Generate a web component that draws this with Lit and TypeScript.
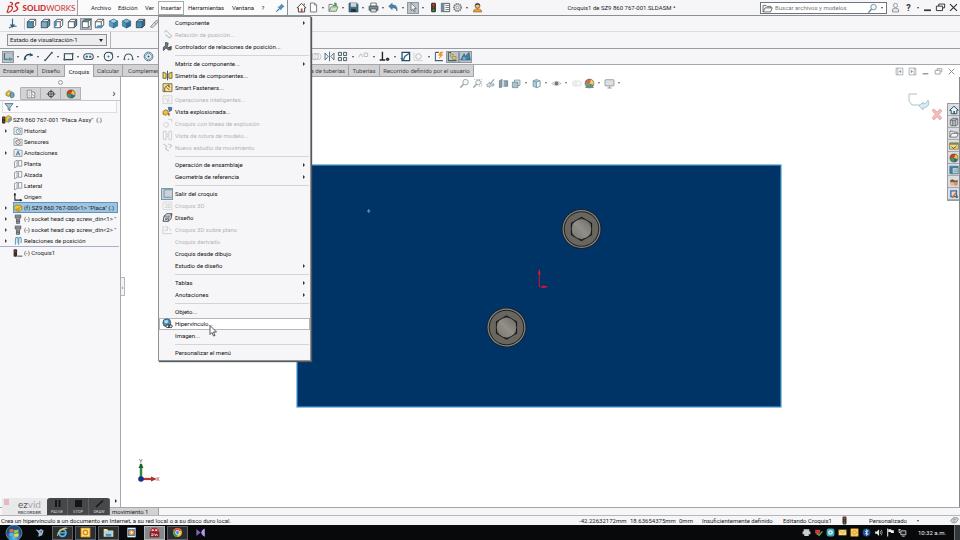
import { LitElement, html, css, svg, nothing } from "lit";
import { customElement } from "lit/decorators.js";
import { classMap } from "lit/directives/class-map.js";

const B = "#2f6f8f";
const K = "#3c4248";

const cube = (front: any, top: any, side: any) => svg`
  <path d="M2 5.500 6 2h8v8.500L10.500 14H2z" fill="#fff" stroke=${K} stroke-width="1"/>
  <path d="M2 5.500 6 2h8l-3.500 3.500z" fill=${top} stroke=${K} stroke-width=".9"/>
  <path d="M10.500 5.500 14 2v8.500L10.500 14z" fill=${side} stroke=${K} stroke-width=".9"/>
  <path d="M2 5.500h8.500V14H2z" fill=${front} stroke=${K} stroke-width=".9"/>`;

const iso = (a: string, b: string, c: string) => svg`
  <path d="M8 1.500 14 4.500v7L8 14.500 2 11.500v-7z" fill=${a} stroke="#1f5a78"/>
  <path d="M2 4.500 8 7.500v7L2 11.500z" fill=${b}/><path d="M8 7.500 14 4.500v7L8 14.500z" fill=${c}/>
  <path d="M2 4.500 8 7.500l6-3M8 7.500v7" fill="none" stroke="#1f5a78" stroke-width=".8"/>`;

const folder = (inner: any) => svg`
  <path d="M1.500 3.500V13.500H14.500V3.500H8L7 2H2.500z" fill="#e9edf0" stroke="#6b7880"/>${inner}`;

const ball = svg`<circle cx="8" cy="8" r="6.500" fill="#3f9a46"/>
  <path d="M8 8 1.500 8A6.500 6.500 0 0 1 10.500 2z" fill="#d33a2c"/>
  <path d="M8 8 10.500 2A6.500 6.500 0 0 1 14 10.500z" fill="#f1c232"/>
  <path d="M8 8 14 10.500A6.500 6.500 0 0 1 8 14.500z" fill="#2d62b4"/>
  <circle cx="8" cy="8" r="6.500" fill="none" stroke="#444" stroke-width=".8"/>`;

const part = svg`<path d="M1.500 7 5 3l3 1.500L10 3l4 2.500V10l-5 4-3-1.500V10L3.500 11 1.500 9.500z" fill="#f0c433" stroke="#8a6a10" stroke-width=".9"/>
  <path d="M6 10 9 8.500 14 5.500M9 8.500V14" fill="none" stroke="#8a6a10" stroke-width=".7"/>`;

const screw = svg`<path d="M3.500 1.500h9V6L10.500 8v7h-5V8L3.500 6z" fill="#989fa3" stroke="#3c4248"/>
  <path d="M3.500 5h9M5.500 9.500h5M5.500 12h5" stroke="#3c4248" stroke-width=".9"/>`;

const plane = svg`<path d="M2.500 4 6.500 2v10L2.500 14zM9 2.500H14V11.500H9z" fill="#fff" stroke="#5a6870"/>
  <path d="M6.500 12H9M6.500 2.500H9" stroke="#5a6870" stroke-width=".8" stroke-dasharray="1 1"/>`;

const ICONS: Record<string, any> = {
  home: svg`<path d="M8 2 1.500 8.500H3.500V14.500H12.500V8.500H14.500z" fill="#fff" stroke=${K} stroke-width="1.400"/><path d="M7 9.500h2.500v5H7z" fill="#b8442e"/><path d="M11 2h2v3l-2-1.800z" fill="#b8442e"/>`,
  page: svg`<path d="M3.500 1.500H9.500L12.500 4.500V14.500H3.500z" fill="#fff" stroke="#5d6468" stroke-width="1.200"/><path d="M9.500 1.500V4.500H12.500" fill="none" stroke="#5d6468"/>`,
  open: svg`<path d="M1.500 13.500V3.500H6L7 5H12V7" fill="#fff" stroke="#5a6a50" stroke-width="1.200"/><path d="M1.500 13.500 4.500 7H14.500L12 13.500z" fill="#cfe0c4" stroke="#5a6a50"/><path d="M8 6 12 2M12 2H9M12 2V5" stroke="#3f9a46" stroke-width="1.500" fill="none"/>`,
  save: svg`<path d="M1.500 1.500H12.500L14.500 3.500V14.500H1.500z" fill="#41728c" stroke="#2c4450"/><path d="M4 1.500H12V7H4z" fill="#c9d6dc"/><path d="M4.500 10H11.500V14.500H4.500z" fill="#27343b"/>`,
  print: svg`<path d="M4 1.500H12V6H4z" fill="#fff" stroke=${K}/><path d="M1.500 6H14.500V12H1.500z" fill="#7f8b91" stroke=${K}/><path d="M4 10H12V14.500H4z" fill="#cfe3ee" stroke=${K}/>`,
  undo: svg`<path d="M1 6 6 2V4.500C11 4 14 7 13 13 12 9.500 10 8 6 8.300V11z" fill="#4a86a6" stroke="#2d5d78" stroke-width=".8"/>`,
  cursor: svg`<path d="M4.500 1.500V12.500L7 10.200 8.700 14.200 10.500 13.400 8.800 9.600H12z" fill="#fff" stroke="#50575b"/>`,
  traffic: svg`<rect x="4.500" y="1" width="7" height="14" rx="2" fill="#2e2b29"/><circle cx="8" cy="4" r="2" fill="#d8382c"/><circle cx="8" cy="8" r="1.700" fill="#6a5a20"/><circle cx="8" cy="12" r="1.800" fill="#3f8a3b"/>`,
  list: svg`<path d="M2 2H14V14H2z" fill="#fff" stroke=${K} stroke-width="1.200"/><path d="M2 2H6.500V14H2z" fill="#6e8ea0"/><path d="M8 5H13M8 8H13M8 11H13" stroke=${K}/>`,
  gear: svg`<circle cx="8" cy="8" r="5.500" fill="#eee" stroke="#6c7276" stroke-width="2" stroke-dasharray="2 1.200"/><circle cx="8" cy="8" r="4.500" fill="#eee" stroke="#6c7276"/><circle cx="8" cy="8" r="1.800" fill="#fff" stroke="#6c7276"/>`,
  user: svg`<path d="M2 14.500C2 11 4 10 8 10S14 11 14 14.500z" fill="#f0a130" stroke="#7a4a10" stroke-width=".8"/><circle cx="8" cy="5.500" r="3.600" fill="#e9b98a" stroke="#5a3a20"/><path d="M4.500 5C5 1 11 1 11.500 5L8 3.800z" fill="#4a3020"/>`,
  person: svg`<circle cx="8" cy="5" r="3" fill="none" stroke="#8a8f93" stroke-width="1.300"/><path d="M3.500 14.500V10.500Q8 7 12.500 10.500V14.500z" fill="#e8e8e8" stroke="#8a8f93" stroke-width="1.300"/>`,
  pin: svg`<path d="M9 2 14 7 12 7.500 9.500 10 9 12.500 3.500 7 6 6.500 8.500 4z" fill="#4b93bd"/><path d="M6.500 9.500 2 14" stroke="#356f92" stroke-width="1.500"/>`,
  triad: svg`<path d="M8 1V12M8 12 3 14.500M8 12H14" stroke=${B} stroke-width="1.700" fill="none"/><path d="M4 9.500 8 14 12 9.500z" fill="#2a5a74"/>`,
  cFront: cube("#4f93b5", "#fff", "#fff"),
  cBack: cube("#7cb0ca", "#dfeaf0", "#4f93b5"),
  cLeft: svg`${cube("#fff", "#fff", "#fff")}<path d="M2 5.500 5.500 3v7.500L2 14z" fill="#4f93b5"/>`,
  cRight: cube("#fff", "#fff", "#4f93b5"),
  cTop: cube("#fff", "#4f93b5", "#fff"),
  cBottom: svg`${cube("#fff", "#fff", "#fff")}<path d="M2 14 5.500 10.500H14L10.500 14z" fill="#4f93b5"/>`,
  iso1: iso("#a6d3e8", "#5d9fc0", "#3a7ea2"),
  iso2: iso("#7fb6d1", "#4a8fb3", "#2c6c90"),
  iso3: cube("#3f8db5", "#8cc1dc", "#2a6d90"),
  normal: svg`<path d="M2 13 9 5 12 3 13.500 4.500 11.500 8 5 14z" fill="#ddd" stroke="#6e6e6e"/><path d="M8 6.500 10.500 8.500" stroke="#6e6e6e"/>`,
  sketchExit: svg`<path d="M2 3V12H7" fill="none" stroke="#40626f" stroke-width="1.500"/><path d="M2 3H14V8" fill="none" stroke="#8ea3ad"/><path d="M7 12 10.500 8.500V10.500H14V13.500H10.500V15z" fill="#4f93b5"/>`,
  dim: svg`<path d="M2 12C3 6 8 3 14 6" fill="none" stroke="#2c3a42" stroke-width="1.800"/><path d="M2 8.500 1 14 5.500 11.500zM10.500 2.500 14.500 6.500 9.500 8z" fill="#2c5a74"/>`,
  line: svg`<path d="M3 14 13 2" stroke="#35424a" stroke-width="1.700"/><circle cx="3" cy="13.500" r="1.500" fill=${B}/><circle cx="13" cy="2.500" r="1.500" fill=${B}/>`,
  rect: svg`<path d="M2 4H14V12.500H2z" fill="none" stroke="#35424a" stroke-width="1.600"/><circle cx="2" cy="12.500" r="1.600" fill=${B}/><circle cx="14" cy="4" r="1.600" fill=${B}/>`,
  slot: svg`<rect x="1" y="4" width="14" height="8.500" rx="4.200" fill="none" stroke="#49565d" stroke-width="1.500"/><circle cx="5.500" cy="8.200" r="1.700" fill=${B}/><circle cx="10.500" cy="8.200" r="1.700" fill=${B}/>`,
  circle: svg`<circle cx="8" cy="8" r="6.200" fill="none" stroke="#35424a" stroke-width="1.500"/><circle cx="8" cy="8" r="1.500" fill=${B}/><circle cx="12.500" cy="3.500" r="1.600" fill=${B}/>`,
  arc: svg`<path d="M2 12C2 2 14 2 14 12" fill="none" stroke="#49565d" stroke-width="1.500"/><circle cx="2" cy="12" r="1.500" fill=${B}/><circle cx="14" cy="12" r="1.500" fill=${B}/><circle cx="8" cy="12" r="1.200" fill=${B}/>`,
  poly: svg`<circle cx="8" cy="8" r="6.300" fill="none" stroke=${B} stroke-width="1.300"/><path d="M5.500 4H10.500L13 8 10.500 12H5.500L3 8z" fill="none" stroke=${B}/><circle cx="8" cy="8" r="1.500" fill=${K}/>`,
  offset: svg`<circle cx="6" cy="8" r="4.500" fill="none" stroke="#bbb" stroke-width="1.500"/><circle cx="10" cy="8" r="4.500" fill="none" stroke="#ccc" stroke-width="1.500"/>`,
  mirror: svg`<path d="M1.500 3V13L6 8zM14.500 3V13L10 8z" fill="#fff" stroke="#40505a" stroke-width="1.200"/><path d="M8 1V15" stroke=${B} stroke-width="1.300"/>`,
  pattern: svg`<path d="M2 2H6.500V6.500H2zM9.500 2H14V6.500H9.500zM2 9.500H6.500V14H2zM9.500 9.500H14V14H9.500z" fill="#e4eef3" stroke="#40505a" stroke-width="1.300"/>`,
  move: svg`<path d="M1 9 4 4 7 9M9 3H14V8H9z" fill="none" stroke="#bbb" stroke-width="1.400"/>`,
  rel: svg`<path d="M5 1V13M1 13H9" fill="none" stroke="#222" stroke-width="2"/><circle cx="12.500" cy="12" r="2.500" fill="#2c3a42"/>`,
  repair: svg`<path d="M3 2H14V14H3z" fill="#fff" stroke="#2c4a5a" stroke-width="1.800"/><path d="M1 10.500 5 13 7 8 14 3" fill="none" stroke="#2b6f93" stroke-width="2"/>`,
  snap: svg`<circle cx="8" cy="8" r="4" fill="none" stroke="#bbb" stroke-width="1.400"/><path d="M1.500 2V14H14.500" fill="none" stroke="#c8c8c8"/>`,
  rapid: svg`<path d="M2 2V14H13M2 2H7" fill="none" stroke="#40626f" stroke-width="1.500"/><path d="M9 1 6 7H9L6.500 12 14 5H10.500L14 1z" fill="#f0922c"/>`,
  instant: svg`<path d="M2 2V14H14M2 2H6" fill="none" stroke="#40626f" stroke-width="1.500"/><path d="M5 4 9 5 8 8 13 8V12H8L9 10 5 8z" fill="#f2d75a" stroke="#6e6a30" stroke-width=".8"/>`,
  shaded: svg`<path d="M1 13 6 4 8 8 13 2 15 13z" fill="#3f7fa3" stroke="#2b5770"/><circle cx="6" cy="11" r="2.500" fill="#6ea8c6"/>`,
  mag: svg`<circle cx="9.500" cy="6" r="4" fill="#f4f8fa" stroke="#7b868c" stroke-width="1.300"/><path d="M6.500 9 2 14" stroke="#7b868c" stroke-width="2"/>`,
  magArea: svg`<path d="M3 2H14V12H9" fill="none" stroke="#8c979c" stroke-dasharray="2 1.300"/><circle cx="9" cy="6.500" r="3.500" fill="#f4f8fa" stroke="#7b868c" stroke-width="1.200"/><path d="M6.500 9 2 14" stroke="#7b868c" stroke-width="2"/>`,
  prev: svg`<path d="M3 13 9 7 13 2" stroke="#7b868c" stroke-width="1.600" fill="none"/><path d="M2 10 7 6V8.500H13V11.500H7V14z" fill="#c5dae4" stroke="#5e8196"/>`,
  section: svg`<path d="M2 4 6 2V13L2 14zM8 4H14V12H8z" fill="#6c8c9c" stroke="#3c4c54"/><path d="M6 3 9 4V12L6 13z" fill="#b8d4e0"/>`,
  orient: svg`<path d="M2 6H10V14H2z" fill="#8fb6c8" stroke="#4c626c"/><path d="M5 3H13V11H10V6H5z" fill="#dce9ef" stroke="#4c626c"/>`,
  display: svg`<path d="M3 4 8 2 13 4V12L8 14 3 12z" fill="#8fbfd6" stroke="#4c7286"/><path d="M8 6V14M3 4 8 6 13 4" fill="none" stroke="#4c7286"/><path d="M8 6 13 4V12L8 14z" fill="#f2f8fb" stroke="#4c7286"/>`,
  eye: svg`<path d="M1 8Q8 2.500 15 8 8 13 1 8z" fill="#f2f2f2" stroke="#9a9a9a"/><circle cx="8" cy="8" r="2.800" fill="#4a5860"/>`,
  appear: svg`<circle cx="6" cy="8" r="4" fill="#eee" stroke="#d0d0d0"/><circle cx="11" cy="8" r="4" fill="#f5f5f5" stroke="#d0d0d0"/>`,
  scene: svg`${ball}<path d="M1.500 14.500 5 9.500 8 13 11 9.500 14.500 14.500z" fill="#52734a"/>`,
  monitor: svg`<rect x="1.500" y="2.500" width="13" height="9" rx="1" fill="#d6dadc" stroke="#7b8084" stroke-width="1.300"/><path d="M5 14.500H11M8 12V14" stroke="#7b8084" stroke-width="1.600"/>`,
  asm: svg`<path d="M1.500 6 6 2.500 10 4V9L5.500 12 1.500 10z" fill="#f0c433" stroke="#86680f"/><path d="M8 7 12 5 14.500 7V12L11 14.500 8 12.500z" fill="#6ba5c2" stroke="#2f5f78"/><circle cx="6" cy="7.500" r="1.800" fill="#fff" stroke="#86680f" stroke-width=".7"/>`,
  root: svg`<rect x="0" y="4" width="5.500" height="11" rx="1.500" fill="#2e2b29"/><circle cx="2.700" cy="7" r="1.500" fill="#d8382c"/><circle cx="2.700" cy="12" r="1.300" fill="#4e7a36"/><path d="M6 5 10 2.500 15 5V10L10 13.500 6 11z" fill="#f0c433" stroke="#86680f"/><path d="M10 7.500 15 5V10L10 13.500z" fill="#5f9dbd"/>`,
  prop: svg`<path d="M2 2H9V14H2zM9 5H14V14H9" fill="#fff" stroke="#5c6468"/><path d="M4 5H7M4 8H7M4 11H7M10 8 13 12" stroke="#5c6468"/>`,
  config: svg`<circle cx="8" cy="8" r="4.500" fill="none" stroke="#333b40" stroke-width="1.500"/><path d="M8 1V15M1 8H15" stroke="#333b40" stroke-width="1.300"/>`,
  ball,
  filter: svg`<path d="M1.500 2.500H14.500L9.500 8.500V14L6.500 12V8.500z" fill="#a8cadb" stroke="#3f5f70" stroke-width="1.200"/>`,
  fHist: folder(svg`<circle cx="8.500" cy="8.500" r="3.500" fill="#fff" stroke="#4a7a94"/><path d="M8.500 6.500V8.500H10.500" stroke="#4a7a94" fill="none"/>`),
  fSens: folder(svg`<circle cx="8" cy="8.500" r="3.500" fill="#fff" stroke="#444"/><path d="M6 6.500 10 10.500" stroke="#c0392b"/>`),
  fAnn: folder(svg`<path d="M5 12 8 5 11 12M6.200 9.500H9.800" fill="none" stroke="#2d6c98" stroke-width="1.300"/>`),
  plane,
  origin: svg`<path d="M3 2V13H14" fill="none" stroke="#1f2326" stroke-width="1.700"/><path d="M1 5 3 1 5 5zM11 11 15 13 11 15z" fill="#1f2326"/>`,
  part,
  screw,
  mates: svg`<path d="M4 14V6C4 1 9 1 8 6V11M9 14V6C9 1 14 1 13 6V11" fill="none" stroke="#6aa6c4" stroke-width="2"/>`,
  sketch: svg`<rect x="1" y="2" width="5.500" height="12" rx="1.500" fill="#3a2f2c"/><circle cx="3.700" cy="5" r="1.500" fill="#a33a32"/><path d="M7 13H15" stroke="#3c4248" stroke-width="1.500"/>`,
  clip: svg`<path d="M3 5 6 2 14 10 11 13 5 8" fill="none" stroke="#c4c4c4" stroke-width="1.500"/>`,
  mateCtl: svg`<path d="M5 2 9 3 8 8 13 13H9L6 10 2 14V9L5 7z" fill="#70777b" stroke="#3a4044"/><path d="M9 9 14 7V13z" fill="#444c50"/>`,
  symm: svg`<path d="M1.500 3 6 5V12H1.500zM14.500 3 10 5V12H14.500z" fill="#f3dc5c" stroke="#55552a" stroke-width="1.200"/><path d="M8 1V15" stroke="#333" stroke-width="1.200"/>`,
  fasten: svg`<path d="M1.500 2.500H14.500V14H1.500z" fill="#f7e3a0" stroke="#6b5a22" stroke-width="1.200"/><path d="M4 14V8L8 5 12 8M7 8 11 12M10 3V7" stroke="#705020" stroke-width="1.400" fill="none"/>`,
  gSmart: svg`<path d="M1.500 2.500H14.500V14H1.500z" fill="#f4f4f4" stroke="#c8c8c8"/><path d="M4 6 8 8V12M10 5V12" stroke="#c8c8c8" fill="none"/>`,
  explode: svg`<path d="M1.500 8 5 5.500 9 7V11L5.500 13.500 1.500 12z" fill="#f0c433" stroke="#7a5a0c"/><path d="M9 2H14V6L11 8z" fill="#3f7fc0" stroke="#24517e"/><path d="M10 10V14" stroke="#b8442e" stroke-width="2"/>`,
  gExpl: svg`<path d="M2 9 5 6 9 8V12L5 13.500zM9 2H14V6" fill="none" stroke="#c8c8c8" stroke-width="1.200"/>`,
  gBreak: svg`<path d="M2 2H6V14H2zM10 2H14V14H10zM7 5 9 8 7 11" fill="none" stroke="#c8c8c8" stroke-width="1.200"/>`,
  gMotion: svg`<path d="M2 3 7 6 5 10 10 13M9 3 14 5 11 9" fill="none" stroke="#c8c8c8" stroke-width="1.600"/>`,
  exitSk: svg`<path d="M3 2.500V13.500H14M3 2.500H14.500" fill="none" stroke="#6b8592" stroke-width="1.200"/>`,
  g3d: svg`<path d="M1.500 3H14.500V14H1.500z" fill="none" stroke="#d0d0d0"/><path d="M4 6H7V11H4M9 6V11H12V6z" fill="none" stroke="#c8c8c8"/>`,
  layout: svg`<path d="M3 6 7 2.500H14.500L13 10 9 13.500H1.500z" fill="#e8e8e8" stroke="#3c4248" stroke-width="1.300"/><path d="M3 6H10.500L9 13.500M10.500 6 14.500 2.500M5.500 8.500H8L7.500 11H5z" fill="none" stroke="#3c4248"/>`,
  g3dp: svg`<path d="M1.500 3V14H14.500M4 4H8V9H4M10 5 13 10" fill="none" stroke="#c8c8c8" stroke-width="1.200"/>`,
  globe: svg`<circle cx="7" cy="7" r="5.800" fill="#4e8fb0" stroke="#24485a"/><path d="M3 4 8 2.500 9 6 6 8 4 7z" fill="#b9dbe8"/><ellipse cx="8.500" cy="12" rx="2.800" ry="2" fill="#fff" stroke="#2c3338" stroke-width="1.400"/><ellipse cx="12.200" cy="12" rx="2.800" ry="2" fill="none" stroke="#2c3338" stroke-width="1.400"/>`,
  search: svg`<circle cx="9.500" cy="6" r="4" fill="#f4f8fa" stroke="#6a8796" stroke-width="1.300"/><path d="M6.500 9 2 14" stroke="#6a8796" stroke-width="2"/>`,
  fold: svg`<path d="M1.500 13V3.500H6L7.500 5H13V7M1.500 13 4.500 7H15L12.500 13z" fill="#f6f6f6" stroke="#555c60" stroke-width="1.200"/>`,
  min: svg`<path d="M3 12H13" stroke="currentColor" stroke-width="2.400"/>`,
  restore: svg`<path d="M5.500 6V3H14V8.500H11.500M2 6H11V12.500H2z" fill="none" stroke="currentColor" stroke-width="1.400"/>`,
  close: svg`<path d="M3 3 13 13M13 3 3 13" stroke="currentColor" stroke-width="1.700"/>`,
  paneL: svg`<path d="M2 2H14V14H2zM5 2V14" fill="none" stroke="currentColor" stroke-width="1.200"/><path d="M11 5V11L7 8z" fill="currentColor"/>`,
  paneR: svg`<path d="M2 2H14V14H2zM11 2V14" fill="none" stroke="currentColor" stroke-width="1.200"/><path d="M5 5V11L9 8z" fill="currentColor"/>`,
  tHome: svg`<path d="M8 2 1 8.500H3.500V14H12.500V8.500H15z" fill="#eaf3f8" stroke="#2d556b" stroke-width="1.600"/><path d="M7 9.500H9.500V14H7z" fill="#2d556b"/>`,
  tLib: svg`<path d="M2 5 6 2H13L14 4V12L11 14H3L2 12z" fill="#c4c8ca" stroke="#3c4248"/><path d="M6 5V14M10 5V14M2 5H10L14 3" fill="none" stroke="#3c4248"/>`,
  tView: svg`<path d="M1 3H15V13H1z" fill="#f3d98c" stroke="#6b5a22"/><path d="M1 3H15V6H1z" fill="#6f8f52"/><path d="M4 9 7 12 12 8" stroke="#6b4a22" fill="none" stroke-width="1.500"/>`,
  tProps: svg`<path d="M1.500 2H14.500V14H1.500z" fill="#dceaf2" stroke="#2d556b" stroke-width="1.200"/><path d="M1.500 2H14.500V5H1.500zM1.500 5H6V14H1.500z" fill="#3f7fa3"/><path d="M7 8H13M7 11H13" stroke="#2d556b"/>`,
  tForum: svg`<path d="M2 6Q5 2 8 5T14 5V9H2z" fill="#8a6a4a"/><circle cx="5" cy="11" r="3" fill="#e3b48a"/><circle cx="11" cy="11" r="3" fill="#cf8f5e"/><path d="M2 6H14" stroke="#4a3a2a"/>`,
  tPdm: svg`<path d="M3 3H12V12H3z" fill="none" stroke="#2f6fa5" stroke-width="2"/><path d="M5 14 12 5" stroke="#d5702a" stroke-width="2.500"/><circle cx="12.500" cy="12.500" r="2" fill="#2f6fa5"/>`,
  bird: svg`<path d="M2 3 7 5 10 3 14 5 12 12 6 14 7 9z" fill="#8fb8dc"/><path d="M8 6 12 5 11 9z" fill="#c3465a"/>`,
  ie: svg`<circle cx="8" cy="8.500" r="5" fill="none" stroke="#58b6ee" stroke-width="2.600"/><path d="M4 8.500H12" stroke="#58b6ee" stroke-width="2"/><path d="M1 13C0 8 9 0 15 2" fill="none" stroke="#f2c744" stroke-width="1.500"/>`,
  outlook: svg`<rect x="1" y="1" width="14" height="14" rx="1" fill="#f6b632"/><path d="M3 3H13V13H3z" fill="#fbe6a4"/><circle cx="8" cy="8" r="3.200" fill="none" stroke="#d88a10" stroke-width="2"/>`,
  explorer: svg`<path d="M1 3H6L7.500 5H15V14H1z" fill="#f1dc92"/><path d="M2 6H14V12H2z" fill="#a9d3e6"/><path d="M4 10H12V14H4z" fill="#4f93c4"/>`,
  media: svg`<rect x="2" y="1" width="12" height="14" fill="#e9edf2"/><rect x="3" y="3" width="10" height="10" fill="#3b7cbd"/><circle cx="8" cy="8" r="4" fill="#f28c28"/><path d="M6.800 5.500V10.500L10.500 8z" fill="#fff"/>`,
  sw: svg`<path d="M2 4 5 1H11L14 4V8H2z" fill="#b52d34"/><rect x="1" y="7" width="14" height="8" fill="#8a1c22"/><path d="M4 4.500H7M9 4.500H12" stroke="#fff" stroke-width="1.600"/><path d="M3 10H6V12.500H3M8 9.500 9.500 13 11 10 12.500 13" fill="none" stroke="#f3e3e3" stroke-width="1.200"/>`,
  chrome: svg`<circle cx="8" cy="8" r="6.500" fill="#f1c232"/><path d="M8 8 2.400 4.700A6.500 6.500 0 0 1 13.600 4.700z" fill="#dd4b39"/><path d="M8 8 2.400 4.700A6.500 6.500 0 0 0 8 14.500z" fill="#3f9a46"/><circle cx="8" cy="8" r="3" fill="#4c8bf5" stroke="#fff"/>`,
  vs: svg`<path d="M2 3 8 8 14 2V14L8 8 2 13z" fill="#8661c5"/><path d="M10 5 14 2V14L10 11z" fill="#b79be8"/>`,
  tPrint: svg`<path d="M3 2H13V6H3zM1 6H15V11H1zM4 11H12V14H4z" fill="#c9ced1"/>`,
  tCheck: svg`<path d="M2 3H11V8L6 13 2 9z" fill="#cf3740"/><path d="M6 10 9 13 15 6" fill="none" stroke="#4fb04a" stroke-width="2.400"/>`,
  tTeal: svg`<rect x="1" y="1" width="14" height="14" rx="4" fill="#3aa7b8"/><circle cx="8" cy="8" r="4.200" fill="#e4f6f9"/><circle cx="8" cy="8" r="1.800" fill="#3aa7b8"/>`,
  tMail: svg`<path d="M1 3H15V13H1z" fill="#f6d67a"/><path d="M1 3 8 9 15 3" fill="none" stroke="#b88a2a"/>`,
  tBt: svg`<circle cx="8" cy="8" r="7" fill="#1f4f8f"/><path d="M5 5 11 10.500 8 13V3L11 5.500 5 11" fill="none" stroke="#fff" stroke-width="1.200"/>`,
  tVol: svg`<path d="M2 6H5L9 2V14L5 10H2z" fill="#e6e6e6"/><path d="M11 5Q13 8 11 11M13 3Q16 8 13 13" fill="none" stroke="#ccc" stroke-width="1.200"/>`,
  tFlag: svg`<path d="M3 1V15" stroke="#eee" stroke-width="1.800"/><path d="M4 2H9L10 4H14V9H9L8 7H4z" fill="#eee"/>`,
  tNet: svg`<path d="M5 5H14V12H5z" fill="#222" stroke="#ddd" stroke-width="1.500"/><path d="M7 14.500H12M2 2V8H4M1 3H5" stroke="#ddd" stroke-width="1.500" fill="none"/>`,
  tag: svg`<path d="M1 8 6 3H13L15 6 10 12H4z" fill="#d8d8d8" stroke="#70767a" stroke-width="1.200"/><path d="M5 6H11M5 9H9" stroke="#70767a"/>`,
};

const icon = (name: string) =>
  html`<svg class="ic" viewBox="0 0 16 16" aria-hidden="true">${ICONS[name]}</svg>`;

const base = css`
  * { box-sizing: border-box; }
  button, input, select {
    font: inherit; color: inherit; background: none; border: 0; padding: 0; margin: 0; border-radius: 0;
  }
  .ic { width: 11px; height: 11px; display: block; flex: none; }
  .tool { width: 12px; height: 12px; display: flex; align-items: center; justify-content: center; flex: none; }
  .drop { width: 8px; height: 12px; display: flex; align-items: center; justify-content: center; flex: none; }
  .drop::before { content: ""; border: 1px solid transparent; border-top: 2px solid #444; border-bottom: 0; }
  .on { background: #bcc4ca; outline: 1px solid #8f989e; outline-offset: -1px; }
`;

/** Tool strip: "name" is a tool, "name*" is pressed, "v" is a drop-down arrow. */
const tools = (names: string[]) =>
  names.map((n) => {
    if (n === "v") return html`<button class="drop" aria-label="Más opciones"></button>`;
    const on = n.endsWith("*");
    const id = on ? n.slice(0, -1) : n;
    return html`<button class=${classMap({ tool: true, on })} aria-label=${id}>${icon(id)}</button>`;
  });

type Item = { t: string; i?: string; off?: boolean; sub?: boolean; hot?: boolean; box?: boolean };

const MENU: Item[][] = [
  [
    { t: "Componente", sub: true },
    { t: "Relación de posición...", i: "clip", off: true },
    { t: "Controlador de relaciones de posición...", i: "mateCtl" },
  ],
  [
    { t: "Matriz de componente...", sub: true },
    { t: "Simetría de componentes...", i: "symm" },
    { t: "Smart Fasteners...", i: "fasten" },
    { t: "Operaciones inteligentes...", i: "gSmart", off: true },
    { t: "Vista explosionada...", i: "explode" },
    { t: "Croquis con líneas de explosión", i: "gExpl", off: true },
    { t: "Vista de rotura de modelo...", i: "gBreak", off: true },
    { t: "Nuevo estudio de movimiento", i: "gMotion", off: true },
  ],
  [
    { t: "Operación de ensamblaje", sub: true },
    { t: "Geometría de referencia", sub: true },
  ],
  [
    { t: "Salir del croquis", i: "exitSk", box: true },
    { t: "Croquis 3D", i: "g3d", off: true },
    { t: "Diseño", i: "layout" },
    { t: "Croquis 3D sobre plano", i: "g3dp", off: true },
    { t: "Croquis derivado", off: true },
    { t: "Croquis desde dibujo" },
    { t: "Estudio de diseño", sub: true },
  ],
  [
    { t: "Tablas", sub: true },
    { t: "Anotaciones", sub: true },
  ],
  [{ t: "Objeto..." }, { t: "Hipervínculo...", i: "globe", hot: true }, { t: "Imagen..." }],
  [{ t: "Personalizar el menú" }],
];

@customElement("insert-menu")
class InsertMenu extends LitElement {
  static styles = [
    base,
    css`
      :host {
        display: block; width: 153px; background: #f6f6f8; border: 1px solid #8e9296;
        box-shadow: 1px 1px 1px #55595c; color: #111; padding-bottom: 1px;
      }
      .group { list-style: none; margin: 0; padding: 0; }
      .group + .group::before { content: ""; display: block; height: 1px; margin: 2px 1px 2px 16px; background: #d4d4d8; }
      .row { width: 100%; height: 12px; display: flex; align-items: center; border: 1px solid transparent; white-space: nowrap; text-align: left; }
      .slot { width: 12px; height: 12px; display: flex; align-items: center; justify-content: center; margin: 0 2px 0 1px; flex: none; }
      .box { background: #cbd3da; outline: 1px solid #7c98ac; outline-offset: -1px; }
      .label { flex: 1; line-height: 10px; }
      .off { color: #b4b4b8; }
      .hot { background: #fff; border-color: #b4b8bc; }
      .sub { border: 2px solid transparent; border-left: 2px solid #333; border-right: 0; margin-right: 4px; }
    `,
  ];
  render() {
    return html`${MENU.map(
      (g) => html`<ul class="group" role="group">
        ${g.map(
          (m) => html`<li>
            <button class=${classMap({ row: true, off: !!m.off, hot: !!m.hot })} ?disabled=${m.off}>
              <span class=${classMap({ slot: true, box: !!m.box })}>${m.i ? icon(m.i) : nothing}</span>
              <span class="label">${m.t}</span>
              ${m.sub ? html`<span class="sub"></span>` : nothing}
            </button>
          </li>`
        )}
      </ul>`
    )}`;
  }
}

@customElement("title-bar")
class TitleBar extends LitElement {
  static styles = [
    base,
    css`
      :host { display: flex; align-items: stretch; height: 16px; background: #f6f6f8; border-bottom: 1px solid #8b8f93; position: relative; z-index: 3; }
      .brand { width: 78px; display: flex; align-items: center; justify-content: center; gap: 2px; padding-left: 4px; border-right: 1px solid #a0a0a4; color: #c8302c; font-size: 8px; line-height: 12px; flex: none; }
      .brand b { font-weight: 900; }
      .ds { width: 15px; height: 13px; flex: none; }
      .name { font-family: Lato, "Liberation Sans", sans-serif; }
      .menus { display: flex; align-items: center; width: 210px; padding-left: 9px; border-right: 1px solid #8b8f93; background: #fbfbfc; flex: none; }
      .m { height: 14px; line-height: 12px; padding: 0 3px; border: 1px solid transparent; white-space: nowrap; text-align: center; flex: none; }
      .m.w1 { width: 27px; } .m.w2 { width: 17px; } .m.w3 { width: 44px; } .m.w4 { width: 29px; }
      .wrap { position: relative; flex: none; }
      .m.open { background: #fff; border-color: #a8aaae; width: 26px; padding: 0; }
      .pop { position: absolute; left: 0; top: 15px; }
      .m.help { width: 12px; }
      .m.pin { padding: 0; display: flex; align-items: center; margin-left: 5px; }
      .quick { display: flex; align-items: center; padding-left: 7px; flex: none; }
      .doc { flex: 1; text-align: center; white-space: nowrap; line-height: 15px; }
      .find { display: flex; align-items: center; width: 127px; height: 12px; margin-top: 2px; border: 1px solid #6f757a; background: #fff; flex: none; padding-left: 1px; }
      .find input { flex: 1; min-width: 0; padding-left: 2px; line-height: 10px; }
      .find input::placeholder { color: #777; opacity: 1; }
      .win { display: flex; align-items: center; margin-left: 2px; color: #333; flex: none; }
      .q { font-size: 9px; font-weight: 700; line-height: 12px; }
      .win .tool { width: 13px; }
      .win .drop { width: 6px; }
    `,
  ];
  render() {
    return html`
      <div class="brand">
        <svg class="ds" viewBox="0 0 32 28" aria-hidden="true">
          <path d="M8 3C15 3 16 7 11 9M3 25C15 22 18 10 7 11L4 12M6 12 2 25" fill="none" stroke="#c8302c" stroke-width="2.600"/>
          <path d="M29 4C22 3 17 8 22 12 28 16 24 22 15 23" fill="none" stroke="#c8302c" stroke-width="3"/>
        </svg>
        <span class="name"><b>SOLID</b>WORKS</span>
      </div>
      <nav class="menus" aria-label="Menú principal">
        <button class="m w1">Archivo</button>
        <button class="m w1">Edición</button>
        <button class="m w2">Ver</button>
        <div class="wrap">
          <button class="m open" aria-expanded="true">Insertar</button>
          <insert-menu class="pop"></insert-menu>
        </div>
        <button class="m w3">Herramientas</button>
        <button class="m w4">Ventana</button>
        <button class="m help">?</button>
        <button class="m pin" aria-label="Fijar menú">${icon("pin")}</button>
      </nav>
      <div class="quick">
        ${tools(["home", "page", "v", "open", "v", "save", "v", "print", "v", "undo", "v", "cursor*", "v", "traffic", "list", "gear", "v", "user"])}
      </div>
      <div class="doc">Croquis1 de SZ9 860 767-001.SLDASM *</div>
      <label class="find">
        ${icon("fold")}
        <input type="search" placeholder="Buscar archivos y modelos" aria-label="Buscar archivos y modelos" />
        ${icon("search")}
        <span class="drop"></span>
      </label>
      <div class="win">
        <button class="tool" aria-label="Usuario">${icon("person")}</button>
        <button class="tool q" aria-label="Ayuda">?</button>
        <button class="drop" aria-label="Más ayuda"></button>
        <button class="tool" aria-label="Minimizar">${icon("min")}</button>
        <button class="tool" aria-label="Restaurar">${icon("restore")}</button>
        <button class="tool" aria-label="Cerrar">${icon("close")}</button>
      </div>
    `;
  }
}

@customElement("tool-rows")
class ToolRows extends LitElement {
  static styles = [
    base,
    css`
      :host { display: block; background: #f6f6f8; }
      .views { height: 15px; display: flex; align-items: center; padding-left: 6px; }
      .views .grid { display: grid; grid-template-columns: repeat(10, 1fr); width: 137px; justify-items: center; margin-left: 6px; border-left: 1px solid #c4c4c8; }
      .state { height: 18px; display: flex; align-items: center; padding-left: 7px; border-bottom: 1px solid #9a9ea2; border-top: 1px solid #dcdce0; }
      .cell { position: relative; width: 104px; height: 16px; display: flex; align-items: center; border-right: 1px solid #b4b4b8; }
      .cell select { appearance: none; width: 100px; height: 12px; line-height: 10px; border: 1px solid #8d9195; background: #ececee; padding-left: 2px; }
      .arrow { position: absolute; right: 7px; top: 7px; border: 2px solid transparent; border-top: 3px solid #222; border-bottom: 0; pointer-events: none; }
      .sketch { height: 16px; display: flex; align-items: center; border-bottom: 1px solid #a4a8ac; }
      .draw { width: 310px; display: flex; padding-left: 2px; flex: none; }
      .edit { display: flex; }
      .edit .tool { width: 13px; }
      .tabs { display: flex; background: #fff; justify-content: space-between; height: 12px; }
      .list { display: flex; height: 12px; background: #d2d2d5; border-bottom: 1px solid #a4a6aa; }
      .tab { width: 29px; height: 11px; line-height: 11px; border-right: 1px solid #a0a2a6; white-space: nowrap; overflow: hidden; text-align: center; color: #444; flex: none; }
      .first { width: 38px; } .second { width: 27px; }
      .add { width: 110px; text-align: left; padding-left: 5px; }
      .pipe { width: 116px; text-align: right; padding-right: 3px; }
      .tube { width: 31px; } .route { width: 94px; }
      .active { background: #fafafc; color: #111; height: 12px; }
      .doc { display: flex; align-items: flex-end; gap: 1px; color: #8d9296; padding-right: 3px; }
      .doc .ic { width: 9px; height: 9px; }
    `,
  ];
  render() {
    return html`
      <div class="views">
        ${tools(["triad"])}
        <div class="grid">${tools(["cFront", "cBack", "cLeft", "cRight", "cTop*", "cBottom", "iso1", "iso2", "iso3", "normal"])}</div>
      </div>
      <div class="state">
        <div class="cell">
          <select aria-label="Estado de visualización">
            <option>Estado de visualización-1</option>
          </select>
          <span class="arrow"></span>
        </div>
      </div>
      <div class="sketch">
        <div class="draw">${tools(["sketchExit*", "v", "dim", "v", "line", "v", "rect", "v", "slot", "v", "circle", "v", "arc", "v", "poly"])}</div>
        <div class="edit">${tools(["offset", "mirror", "pattern", "v", "move", "v", "rel", "v", "repair", "snap", "v", "rapid", "instant*", "shaded*"])}</div>
      </div>
      <div class="tabs">
        <div class="list" role="tablist">
          <button role="tab" class="tab first">Ensamblaje</button>
          <button role="tab" class="tab second">Diseño</button>
          <button role="tab" class="tab active" aria-selected="true">Croquis</button>
          <button role="tab" class="tab">Calcular</button>
          <button role="tab" class="tab add">Complementos</button>
          <button role="tab" class="tab pipe">Sistema de tuberías</button>
          <button role="tab" class="tab tube">Tuberías</button>
          <button role="tab" class="tab route">Recorrido definido por el usuario</button>
        </div>
        <div class="doc">${tools(["paneL", "paneR", "min", "restore", "close"])}</div>
      </div>
    `;
  }
}

type Node = { t: string; i: string; exp?: boolean; sel?: boolean };
const TREE: Node[] = [
  { t: "Historial", i: "fHist", exp: true },
  { t: "Sensores", i: "fSens" },
  { t: "Anotaciones", i: "fAnn", exp: true },
  { t: "Planta", i: "plane" },
  { t: "Alzada", i: "plane" },
  { t: "Lateral", i: "plane" },
  { t: "Origen", i: "origin" },
  { t: '(f) SZ9 860 767-000<1> "Placa" (.)', i: "part", exp: true, sel: true },
  { t: '(-) socket head cap screw_din<1> "', i: "screw", exp: true },
  { t: '(-) socket head cap screw_din<2> "', i: "screw", exp: true },
  { t: "Relaciones de posición", i: "mates", exp: true },
];

@customElement("feature-tree")
class FeatureTree extends LitElement {
  static styles = [
    base,
    css`
      :host { display: flex; flex-direction: column; background: #f7f7f9; border-right: 1px solid #a8a8ac; color: #222; }
      .grip { height: 10px; display: flex; align-items: center; justify-content: center; }
      .grip::before { content: ""; width: 3px; height: 3px; border: 1px solid #999; border-radius: 50%; }
      .tabs { display: flex; height: 14px; align-items: stretch; border-bottom: 1px solid #c8c8cc; }
      .t { width: 20px; display: flex; align-items: center; justify-content: center; background: #d3d3d6; border: 1px solid #b2b2b6; border-left: 0; }
      .t.cur { background: #f7f7f9; border-color: transparent #b2b2b6 transparent transparent; width: 21px; }
      .more { margin-left: auto; width: 12px; font-size: 11px; line-height: 11px; color: #333; }
      .filter { display: flex; align-items: center; height: 12px; margin: 0 3px 0 2px; border: 1px solid #dedee2; border-top: 0; background: #fbfbfd; padding-left: 1px; }
      .filter .drop { width: 5px; }
      .root, .row { display: flex; align-items: center; height: 11px; white-space: nowrap; line-height: 11px; }
      .root { gap: 1px; padding-left: 2px; height: 12px; }
      .list { list-style: none; margin: 0; padding: 0; overflow: hidden; }
      .tw { width: 13px; padding-left: 5px; flex: none; display: flex; }
      .exp::before { content: ""; border: 2px solid transparent; border-left: 2px solid #444; border-right: 0; }
      .body { display: flex; align-items: center; gap: 1px; height: 11px; }
      .ic { width: 10px; height: 10px; }
      .sel .body { background: #9ec4e2; outline: 1px solid #5f93ba; outline-offset: -1px; width: 105px; }
      .bar { border-top: 1px solid #a9acd0; margin-right: 1px; }
    `,
  ];
  render() {
    const row = (n: Node) => html`<li class=${classMap({ row: true, sel: !!n.sel })}>
      <span class=${classMap({ tw: true, exp: !!n.exp })}></span>
      <span class="body">${icon(n.i)}<span>${n.t}</span></span>
    </li>`;
    return html`
      <div class="grip"></div>
      <div class="tabs">
        <button class="t cur" aria-label="Gestor de diseño">${icon("asm")}</button>
        <button class="t" aria-label="Propiedades">${icon("prop")}</button>
        <button class="t" aria-label="Configuraciones">${icon("config")}</button>
        <button class="t" aria-label="Apariencias">${icon("ball")}</button>
        <button class="more" aria-label="Más">›</button>
      </div>
      <div class="filter">${icon("filter")}<span class="drop"></span></div>
      <div class="root">${icon("root")}<span>SZ9 860 767-001 "Placa Assy" &nbsp;(.)</span></div>
      <ul class="list">${TREE.map(row)}</ul>
      <ul class="list bar">${row({ t: "(-) Croquis1", i: "sketch" })}</ul>
    `;
  }
}

@customElement("graphics-view")
class GraphicsView extends LitElement {
  static styles = [
    base,
    css`
      :host { display: block; position: relative; background: #fff; border-right: 1px solid #85898d; overflow: hidden; }
      .scene { position: absolute; left: 0; top: 0; width: 838px; height: 431px; }
      .hud { position: relative; display: flex; justify-content: center; opacity: 0.8; }
      .hud .tool { width: 13px; } .hud .drop { width: 7px; }
      .confirm { position: absolute; right: 15px; top: 14px; width: 38px; height: 30px; }
      .pane { position: absolute; right: 0; top: 26px; width: 12px; display: flex; flex-direction: column; border: 1px solid #999da1; border-right: 0; background: #dcdde0; }
      .pane .tool { width: 11px; height: 12px; border-bottom: 1px solid #a6a9ac; }
      .pane .ic { width: 10px; height: 10px; }
      .split { position: absolute; left: 0; top: 200px; width: 4px; height: 19px; border: 1px solid #b8b8bc; border-left: 0; background: #f4f4f6; font-size: 6px; line-height: 17px; }
      .lbl { font-size: 6px; }
    `,
  ];
  render() {
    const bolt = (x: number, y: number) => svg`<g transform="translate(${x} ${y})">
      <circle r="20" fill="#16222e"/><circle r="19" fill="#85847f"/><circle r="17.800" fill="#1f2122"/><circle r="16.800" fill="#68665f"/>
      <path d="M0 -11.500 10 -5.700V5.700L0 11.500 -10 5.700V-5.700z" fill="#4f4e4a" stroke="#191a1a" stroke-width="1.200"/>
      <circle r="9.800" fill="url(#cone)"/></g>`;
    return html`
      <svg class="scene" viewBox="0 0 838 431" role="img" aria-label="Placa con dos tornillos">
        <defs><linearGradient id="cone" x1="0" y1="1" x2="1" y2="0"><stop offset="0" stop-color="#77766f"/><stop offset=".5" stop-color="#918f88"/><stop offset="1" stop-color="#6b6963"/></linearGradient></defs>
        <rect x="176" y="88" width="484" height="242" fill="#003466" stroke="#4a9ad0" stroke-width="1.200"/>
        <path d="M246 134H249.500M247.700 132V136" stroke="#6f8fb4"/>
        ${bolt(460.5, 152)} ${bolt(385.5, 250.5)}
        <path d="M418.300 193V210M419 210H426" stroke="#d3142c" stroke-width="1" fill="none"/>
        <path d="M417 197.500 418.300 192 419.700 197.500zM421.500 208.500 427 209.800 421.500 211z" fill="#e8142c"/>
        <path d="M20 401V387" stroke="#2e8b3a" stroke-width="2.500"/><path d="M17.500 391 20 386 22.500 391z" fill="#1f5f2a"/>
        <path d="M20 402H32" stroke="#b3392f" stroke-width="2.200"/><path d="M30 399.500 36 402 30 404.500z" fill="#a33"/>
        <circle cx="20" cy="402" r="2.800" fill="#1c2f8f"/>
        <text class="lbl" x="18" y="386" fill="#555">Y</text><text class="lbl" x="35" y="404" fill="#c05050">X</text>
      </svg>
      <div class="hud">${tools(["mag", "magArea", "prev", "section", "orient", "v", "display", "v", "eye", "v", "appear", "scene", "v", "monitor", "v"])}</div>
      <svg class="confirm" viewBox="0 0 38 30" aria-hidden="true">
        <path d="M11 3H3V10L6 14H14" fill="none" stroke="#a9c3cc" stroke-width="1"/>
        <path d="M13 15 17 11V13Q21 13 22 9 25 16 17 17V19z" fill="#dbeaf0" stroke="#9dbccb" stroke-width=".8"/>
        <path d="M26 19 28 18 31 21 34 18 36 20 33 23.500 36 27 34 29 31 26 28 29 26 27 29 23.500z" fill="#f0bcbc" stroke="#e6a8a8" stroke-width=".8"/>
      </svg>
      <button class="split" aria-label="Contraer panel">‹</button>
      <div class="pane">${tools(["tHome", "tLib", "fold", "tView", "ball", "tProps", "tForum", "tPdm"])}</div>
    `;
  }
}

@customElement("app-root")
class AppRoot extends LitElement {
  static styles = [
    base,
    css`
      :host {
        display: flex; flex-direction: column; min-height: 100vh; background: #f6f6f8; color: #1c1c1c;
        font-family: Roboto, "Noto Sans", sans-serif; font-size: 6px; line-height: 10px; overflow: hidden;
      }
      .work { flex: 1; display: flex; position: relative; }
      feature-tree { width: 121px; flex: none; overflow: hidden; }
      graphics-view { flex: 1; min-width: 0; }
      .bottom { height: 8px; display: flex; padding-left: 109px; border-top: 1px solid #a4a6aa; }
      .motion { width: 50px; line-height: 7px; background: #d2d2d5; border-right: 1px solid #a0a2a6; text-align: left; padding-left: 3px; }
      .status { height: 10px; display: flex; align-items: center; border-top: 1px solid #b4b6ba; padding: 0 1px; white-space: nowrap; line-height: 9px; }
      .hint { flex: 1; }
      .c1 { width: 51px; } .c2 { width: 49px; } .c3 { width: 23px; } .c4 { width: 81px; } .c5 { width: 57px; } .c6 { width: 29px; } .c7 { width: 46px; }
      .status .ic { width: 9px; height: 9px; }
      .status .drop { width: 6px; height: 9px; margin-right: 29px; }
      .rec { position: absolute; left: 2px; bottom: -8px; width: 108px; height: 17px; display: flex; align-items: stretch; background: #e9e9eb; z-index: 2; }
      .dot { width: 5px; height: 6px; background: #e4b9bf; margin: 1px 3px 0 2px; }
      .ez { width: 35px; display: flex; flex-direction: column; align-items: center; justify-content: center; color: #55595c; }
      .ez b { font: 400 10px/12px Lato, sans-serif; } .ez i { color: #a6a6aa; font-style: normal; }
      .ez small { font: 700 4px/5px "Liberation Sans", sans-serif; }
      .deck { flex: 1; display: flex; background: #46484a; border-radius: 3px 3px 0 0; overflow: hidden; }
      .deck button { flex: 1; display: flex; flex-direction: column; align-items: center; justify-content: space-between; padding: 1px 0; color: #d4d4d4; border-right: 1px solid #5e6062; font-size: 4px; line-height: 5px; }
      .deck svg { width: 9px; height: 9px; }
      .taskbar { height: 15px; display: flex; align-items: center; background: #08090b; color: #f2f2f2; }
      .orb { width: 27px; height: 15px; display: flex; justify-content: center; flex: none; overflow: hidden; }
      .orb svg { width: 18px; height: 16px; }
      .apps { display: flex; align-items: center; gap: 2px; flex: 1; padding-left: 2px; }
      .app { width: 21px; height: 14px; display: flex; align-items: center; justify-content: center; border: 1px solid transparent; }
      .run { background: #2b2e31; border-color: #5c6064; }
      .live { background: #85888c; border-color: #b4b7ba; }
      .tray { display: flex; align-items: center; gap: 3px; }
      .tray .ic { width: 9px; height: 9px; }
      .clock { margin: 0 8px 0 11px; white-space: nowrap; }
      .peek { width: 6px; height: 15px; background: #34373a; border-left: 1px solid #70757a; }
      .next { position: absolute; left: 115px; bottom: 4px; border: 2px solid transparent; border-left: 2px solid #333; border-right: 0; }
      .pointer { position: absolute; left: 209px; top: 325px; width: 8px; height: 12px; z-index: 5; pointer-events: none; }
    `,
  ];
  render() {
    const app = (i: string, c = "") => html`<button class="app ${c}" aria-label=${i}>${icon(i)}</button>`;
    return html`
      <title-bar></title-bar>
      <tool-rows></tool-rows>
      <div class="work">
        <feature-tree></feature-tree>
        <graphics-view></graphics-view>
        <div class="rec">
          <span class="dot"></span>
          <div class="ez"><b>ez<i>vid</i></b><small>RECORDER</small></div>
          <div class="deck">
            <button><svg viewBox="0 0 9 9"><path d="M2 1H4V8H2zM5.500 1H7.500V8H5.500z" fill="#151617"/></svg>PAUSE</button>
            <button><svg viewBox="0 0 9 9"><path d="M1 1H8V8H1z" fill="#151617"/></svg>STOP</button>
            <button><svg viewBox="0 0 9 9"><path d="M1 8 8 1.500" stroke="#151617" stroke-width="1.500"/></svg>DRAW</button>
          </div>
        </div>
        <span class="next"></span>
      </div>
      <div class="bottom"><button class="motion">movimiento 1</button></div>
      <footer class="status">
        <span class="hint">Crea un hipervínculo a un documento en Internet, a su red local o a su disco duro local.</span>
        <span class="c1">-42.22632172mm</span><span class="c2">18.63654375mm</span><span class="c3">0mm</span>
        <span class="c4">Insuficientemente definido</span><span class="c5">Editando Croquis1</span>
        <span class="c6">${icon("traffic")}</span><span class="c7">Personalizado</span>
        <span class="drop"></span>${icon("tag")}
      </footer>
      <div class="taskbar">
        <button class="orb" aria-label="Inicio">
          <svg viewBox="0 0 18 16">
            <defs><radialGradient id="orb" cy=".8"><stop offset="0" stop-color="#5fc3ee"/><stop offset="1" stop-color="#1c4f82"/></radialGradient></defs>
            <circle cx="9" cy="8" r="8" fill="url(#orb)" stroke="#7fa9c4" stroke-width=".6"/>
            <path d="M4.500 4.500Q6.500 3.300 8.500 4.500V7.500Q6.500 6.500 4.500 7.500z" fill="#ee6a35"/><path d="M9.200 4.700Q11.500 5.500 13.500 4.300V7.300Q11.500 8.500 9.200 7.700z" fill="#8fce4a"/>
            <path d="M4.500 8.200Q6.500 7.200 8.500 8.200V11.300Q6.500 10.200 4.500 11.300z" fill="#58b4ee"/><path d="M9.200 8.500Q11.500 9.300 13.500 8.100V11.200Q11.500 12.300 9.200 11.500z" fill="#fbd33e"/>
          </svg>
        </button>
        <div class="apps">
          ${app("bird")}${app("ie", "run")}${app("outlook", "run")}${app("explorer", "run")}${app("media")}${app("sw", "live")}${app("chrome", "run")}${app("vs")}
        </div>
        <div class="tray">${["tPrint", "tCheck", "tTeal", "tMail", "outlook", "tBt", "tVol", "tFlag", "tNet"].map((n) => icon(n))}</div>
        <time class="clock">10:32 a.m.</time>
        <button class="peek" aria-label="Mostrar escritorio"></button>
      </div>
      <svg class="pointer" viewBox="0 0 16 24" aria-hidden="true"><path d="M2 1V19L6 15 9 22 12 21 9 14H15z" fill="#fff" stroke="#333" stroke-width="1.600"/></svg>
    `;
  }
}
